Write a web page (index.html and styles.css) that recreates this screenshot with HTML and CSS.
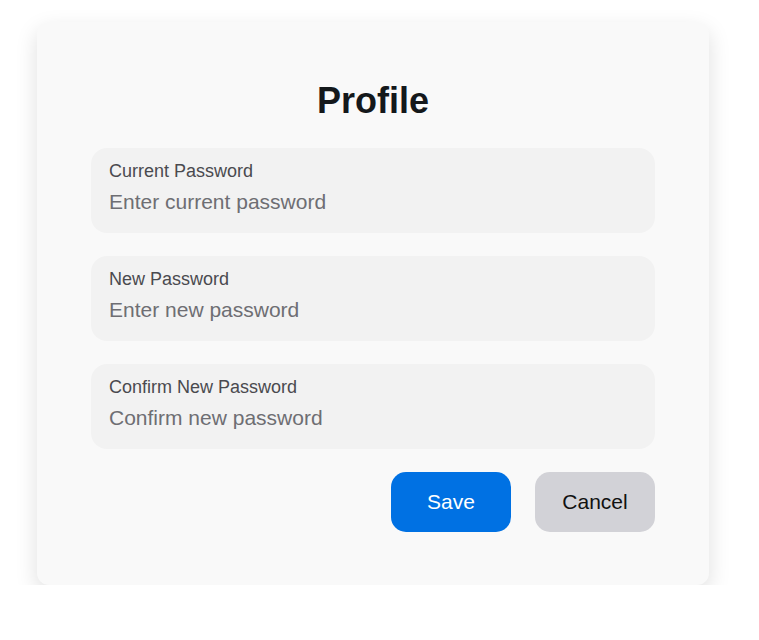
FILE: index.html
```html
<!DOCTYPE html>
<html lang="en">
<head>
<meta charset="utf-8">
<title>Profile</title>
<link rel="stylesheet" href="styles.css">
</head>
<body>
<main class="card">
  <h1 class="title">Profile</h1>
  <form class="form">
    <div class="field">
      <label class="field-label" for="cur">Current Password</label>
      <input class="field-input" id="cur" type="password" placeholder="Enter current password">
    </div>
    <div class="field">
      <label class="field-label" for="new">New Password</label>
      <input class="field-input" id="new" type="password" placeholder="Enter new password">
    </div>
    <div class="field">
      <label class="field-label" for="conf">Confirm New Password</label>
      <input class="field-input" id="conf" type="password" placeholder="Confirm new password">
    </div>
    <div class="actions">
      <button type="button" class="btn btn-primary">Save</button>
      <button type="button" class="btn btn-secondary">Cancel</button>
    </div>
  </form>
</main>
</body>
</html>
```
FILE: styles.css
```css
* { box-sizing: border-box; }
html, body { margin: 0; padding: 0; background: #ffffff; }
body {
  font-family: "Liberation Sans", Arial, sans-serif;
  padding: 22px 0 0 37px;
}
.card {
  width: 672px;
  height: 563px;
  background: #f9f9f9;
  border-radius: 12px;
  box-shadow: 0 8px 22px rgba(0, 0, 0, 0.13);
  padding: 58px 54px 53px;
}
.title {
  margin: 0 0 26px;
  text-align: center;
  font-size: 36px;
  line-height: 42px;
  font-weight: 700;
  color: #14181b;
}
.form {
  display: flex;
  flex-direction: column;
  gap: 23px;
}
.field {
  height: 85px;
  background: #f2f2f2;
  border-radius: 16px;
  padding: 13px 18px 0;
  display: flex;
  flex-direction: column;
}
.field-label {
  font-size: 18px;
  line-height: 21px;
  color: #4a4a4f;
}
.field-input {
  margin-top: 7px;
  border: none;
  background: transparent;
  padding: 0;
  font-family: inherit;
  font-size: 21px;
  line-height: 25px;
  color: #1d1d1f;
  outline: none;
}
.field-input::placeholder { color: #6e6e73; opacity: 1; }
.actions {
  display: flex;
  justify-content: flex-end;
  gap: 24px;
}
.btn {
  width: 120px;
  height: 60px;
  border: none;
  border-radius: 15px;
  font-family: inherit;
  font-size: 21px;
}
.btn-primary { background: #0071e3; color: #ffffff; }
.btn-secondary { background: #d2d2d7; color: #111111; }
```
